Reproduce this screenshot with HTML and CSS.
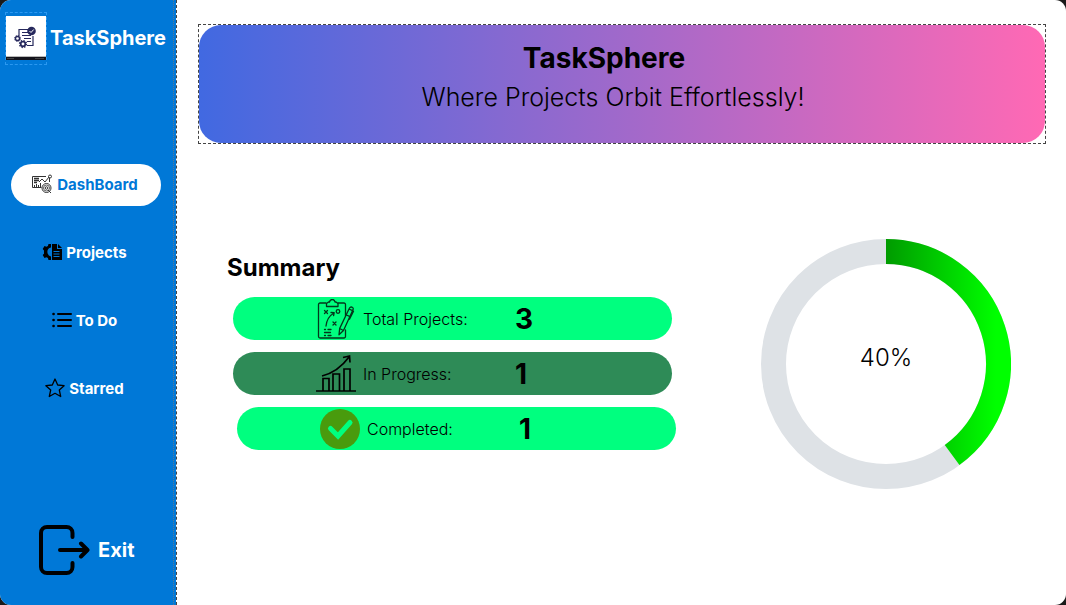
FILE: index.html
```html
<!DOCTYPE html>
<html lang="en">
<head>
<meta charset="utf-8">
<title>TaskSphere</title>
<link rel="stylesheet" href="styles.css">
</head>
<body>
<div class="app">
  <aside class="sidebar">
    <div class="brand">
      <div class="brand-logo">
        <svg viewBox="0 0 40 44" width="40" height="44" aria-hidden="true">
          <path fill="#fff" d="M0 0h40v40H0z"/>
          <path fill="#b9b9b9" d="M0 40h40v1H0z"/>
          <path fill="#14141c" d="M0 41h40v3H0z"/>
          <path stroke="#555" stroke-width=".7" d="M1 42.500h7M29 42.500h9"/>
          <g fill="none" stroke="#26285c">
            <path d="M22 13.500H13v7M27 20v9.500h-6" stroke-width="1.200"/>
            <path d="M16 16.500h6M16 19.500h9M18 22.500h7M21 25.500h4" stroke-width="1"/>
            <circle cx="11.500" cy="22.500" r="2" stroke-width="1.300"/>
            <circle cx="11.500" cy="22.500" r="3" stroke-width="1" stroke-dasharray="1.200 1.150"/>
            <circle cx="17" cy="28" r="2.300" stroke-width="1.700"/>
            <circle cx="17" cy="28" r="3.500" stroke-width="1.300" stroke-dasharray="1.400 1.350"/>
          </g>
          <circle cx="25.500" cy="15" r="4.300" fill="#26285c"/>
          <path d="M23.500 15l1.500 1.500 2.700-3" fill="none" stroke="#fff"/>
        </svg>
      </div>
      <span class="brand-name">TaskSphere</span>
    </div>
    <nav class="nav">
      <button class="nav-item nav-item-active" type="button">
        <svg viewBox="0 0 22 20" width="22" height="20" fill="none" stroke="#333" aria-hidden="true">
          <path d="M15 2.500H1.500v11h9"/>
          <path d="M3 4.500h5M3 6.500h5M3 8.500h3" stroke-width="1.400"/>
          <path d="M3.500 13v-2M5.500 13v-3M7.500 13v-2M9.500 13v-4"/>
          <path d="M8 8l3-3 3 3 4-5M18.500 4v4"/>
          <circle cx="19" cy="2.500" r="1.500"/>
          <circle cx="15.500" cy="14" r="4.500"/>
          <circle cx="15.500" cy="14" r="3" stroke-width=".8"/>
          <circle cx="15.500" cy="14" r="1.300"/>
          <path d="M17 16l3 3"/>
        </svg>
        <span>DashBoard</span>
      </button>
      <button class="nav-item" type="button">
        <svg viewBox="0 0 20 16" width="20" height="16" aria-hidden="true">
          <path d="M9 0v2.500a5.600 5.600 0 0 0 0 11V16H6.500l-.6-2-1.400-.8-2 .7-1.800-2.900L2 9.700V6.500L.7 5l1.800-2.900 2 .7L5.900 2l.6-2z"/>
          <path d="M9 4.500v7a3.600 3.600 0 0 1 0-7z" fill="#0078d7"/>
          <path d="M6.800 1.500h2.200v2a4.600 4.600 0 0 0 0 9v2H6.800l-.5-1.800-2-1-1.700.4-.9-1.400L3 9.300V6.700L1.700 5.300l.9-1.400 1.700.4 2-1z"/>
          <path d="M8.500 4.500a4 4 0 0 0 0 7" fill="none" stroke="#0078d7" stroke-width=".8"/>
          <path d="M10 0h5v5h5v11H10z"/>
          <path d="M16 0l4 4h-4z"/>
          <path d="M11.500 7.500h6M11.500 10h6M11.500 12.500h6" stroke="#0078d7"/>
        </svg>
        <span>Projects</span>
      </button>
      <button class="nav-item" type="button">
        <svg viewBox="0 0 20 16" width="20" height="16" stroke="#000" stroke-width="2" stroke-linecap="round" aria-hidden="true">
          <path d="M6 2h13M6 8h13M6 14h13"/>
          <path d="M1.500 2h.1M1.500 8h.1M1.500 14h.1" stroke-width="2.600"/>
        </svg>
        <span>To Do</span>
      </button>
      <button class="nav-item" type="button">
        <svg viewBox="0 0 20 20" width="20" height="20" fill="none" stroke="#000" stroke-width="1.300" stroke-linejoin="round" aria-hidden="true">
          <path d="M10 1l2.700 6 6.400.7-4.800 4.300 1.400 6.500L10 15.300l-5.700 3.200 1.400-6.500L.9 7.700 7.300 7z"/>
        </svg>
        <span>Starred</span>
      </button>
    </nav>
    <button class="exit" type="button">
      <svg viewBox="0 0 51 50" width="51" height="50" fill="none" stroke="#000" stroke-width="4" stroke-linecap="round" stroke-linejoin="round" aria-hidden="true">
        <path d="M33.500 12V8a6 6 0 0 0-6-6H8a6 6 0 0 0-6 6v34a6 6 0 0 0 6 6h19.500a6 6 0 0 0 6-6v-4"/>
        <path d="M21 25h27M42 18.500l6.500 6.500-6.500 6.500"/>
      </svg>
      <span>Exit</span>
    </button>
  </aside>

  <main class="main">
    <header class="banner-frame">
      <div class="banner">
        <h1 class="banner-title">TaskSphere</h1>
        <p class="banner-tagline">Where Projects Orbit Effortlessly!</p>
      </div>
    </header>
    <div class="content">
      <section class="summary">
        <h2 class="summary-title">Summary</h2>
        <ul class="stats">
          <li class="stat">
            <svg viewBox="0 0 40 40" width="40" height="40" fill="none" stroke-width="1.300" aria-hidden="true">
              <g stroke="#03371b" stroke-linejoin="round" stroke-linecap="round">
                <path d="M10 4H4a1.500 1.500 0 0 0-1.500 1.500v32A1.500 1.500 0 0 0 4 39h24a1.500 1.500 0 0 0 1.500-1.500V31M29.500 17V5.500A1.500 1.500 0 0 0 28 4h-6"/>
                <path d="M10.500 7.500V4.500l2-1.500h1q.5-2.500 2.800-2.500T19 3h1l2 1.500v3z"/>
                <path d="M8.500 11.500l3 3M11.500 11.500l-3 3M17 23l3 3M20 23l-3 3M10 27q1-9 8-13M15 13.500l3.200.2-.6 3"/>
                <circle cx="22" cy="12.500" r="1.800"/>
                <path d="M8.500 30.500h1M12 30.500h3M8.500 33.500h6M8.500 36.500h1M12 36.500h3"/>
                <path d="M33 10l3.500 1.700-9 19.800-4.500 4.200.7-6.300zM23.700 29.500l3.700 2M30.500 16l3.500 1.700M33 10q1.500-3 3.500-1.500 1.500 1 0 3.200M36.500 11.500l1 .7-4 8"/>
              </g>
            </svg>
            <span class="stat-label">Total Projects:</span>
            <strong class="stat-value">3</strong>
          </li>
          <li class="stat stat-progress">
            <svg viewBox="0 0 40 40" width="40" height="40" fill="none" stroke="#000" stroke-width="1.700" aria-hidden="true">
              <path d="M0 37h40"/>
              <path d="M7 37V24.500h6V37M17 37V20h6.500V37M28 37V15h6V37"/>
              <path d="M6 22Q22 18 33 3M27 3.500l6.500-1.500.5 6.500"/>
            </svg>
            <span class="stat-label">In Progress:</span>
            <strong class="stat-value">1</strong>
          </li>
          <li class="stat stat-completed">
            <svg viewBox="0 0 40 40" width="40" height="40" aria-hidden="true">
              <circle cx="20" cy="20" r="20" fill="#499b0d"/>
              <path d="M10.500 19.500l7.500 7.500 12-13.500" fill="none" stroke="#00ff7f" stroke-width="5" stroke-linecap="round"/>
            </svg>
            <span class="stat-label">Completed:</span>
            <strong class="stat-value">1</strong>
          </li>
        </ul>
      </section>
      <figure class="gauge">
        <svg viewBox="0 0 250 250" width="250" height="250" aria-hidden="true">
          <defs>
            <linearGradient id="gauge-fill" gradientUnits="userSpaceOnUse" x1="125" y1="0" x2="235" y2="0">
              <stop offset="0" stop-color="#009b00"/>
              <stop offset="1" stop-color="#00ff00"/>
            </linearGradient>
          </defs>
          <circle cx="125" cy="125" r="112.500" fill="none" stroke="#dee2e6" stroke-width="25"/>
          <path d="M125 12.500A112.500 112.500 0 0 1 191.100 216" fill="none" stroke="url(#gauge-fill)" stroke-width="25"/>
        </svg>
        <figcaption class="gauge-value">40%</figcaption>
      </figure>
    </div>
  </main>
</div>
</body>
</html>
```
FILE: styles.css
```css
* {
  box-sizing: border-box;
}

body {
  margin: 0;
  background: #1a1a1a;
  color: #000;
  font-family: "Century Gothic", Inter, sans-serif;
  font-weight: 300;
}

h1, h2, p, ul, figure {
  margin: 0;
  padding: 0;
}

svg {
  flex: none;
}

button {
  border: 0;
  padding: 0;
  background: none;
  color: #fff;
  font-family: inherit;
  font-weight: 700;
  display: flex;
  align-items: center;
  justify-content: center;
}

.app {
  min-height: 100vh;
  display: flex;
  background: #fff;
  border-radius: 11px;
  overflow: hidden;
}

.sidebar {
  position: relative;
  flex: none;
  width: 177px;
  display: flex;
  flex-direction: column;
  background: #0078d7;
  background-clip: padding-box;
  border-right: 1px dashed #444;
}

.sidebar::after {
  content: "";
  position: absolute;
  top: 0;
  bottom: 0;
  right: 2px;
  border-right: 1px dotted #5b7892;
}

.brand {
  display: flex;
  align-items: center;
  gap: 3px;
  padding: 12px 0 0 5px;
}

.brand-logo {
  display: flex;
  border: 1px dashed #2b98f0;
  padding: 3px 0 4px;
}

.brand-name {
  padding-bottom: 2px;
  color: #fff;
  font-size: 20px;
  font-weight: 700;
}

.nav {
  display: grid;
  gap: 26px;
  padding: 99px 15px 0 11px;
}

.nav-item {
  height: 42px;
  gap: 4px;
  padding: 0 3px 2px 0;
  border-radius: 21px;
  font-size: 15px;
}

.nav-item-active {
  background: #fff;
  color: #0078d7;
}

.exit {
  margin: auto auto 30px 39px;
  gap: 8px;
  font-size: 20px;
}

.main {
  flex: 1;
  min-width: 0;
  padding: 24px 20px 24px 21px;
}

.banner-frame {
  border: 1px dashed #444;
}

.banner {
  height: 118px;
  padding-top: 15px;
  padding-right: 18px;
  border-radius: 22px;
  background: linear-gradient(90deg, #4169e1, #ff69b4);
  text-align: center;
}

.banner-title {
  padding-right: 18px;
  font-size: 28px;
  line-height: 36px;
}

.banner-tagline {
  font-size: 25px;
  line-height: 42px;
}

.content {
  display: flex;
  justify-content: space-between;
  align-items: flex-start;
  padding: 95px 35px 0 29px;
}

.summary {
  padding-top: 14px;
}

.summary-title {
  font-size: 24px;
  line-height: 30px;
}

.stats {
  display: grid;
  gap: 12px;
  width: 443px;
  margin: 14px 0 0 6px;
  list-style: none;
}

.stat {
  display: flex;
  align-items: center;
  width: 439px;
  height: 43px;
  padding-left: 83px;
  border-radius: 22px;
  background: #00ff7f;
}

.stat-progress {
  background: #2e8b57;
}

.stat-completed {
  justify-self: end;
}

.stat-label {
  width: 159px;
  padding-left: 7px;
  font-size: 16px;
}

.stat-value {
  font-size: 28px;
  font-weight: 700;
}

.gauge {
  display: grid;
  place-items: center;
}

.gauge svg,
.gauge-value {
  grid-area: 1 / 1;
}

.gauge-value {
  padding-bottom: 14px;
  font-size: 24px;
}
```
